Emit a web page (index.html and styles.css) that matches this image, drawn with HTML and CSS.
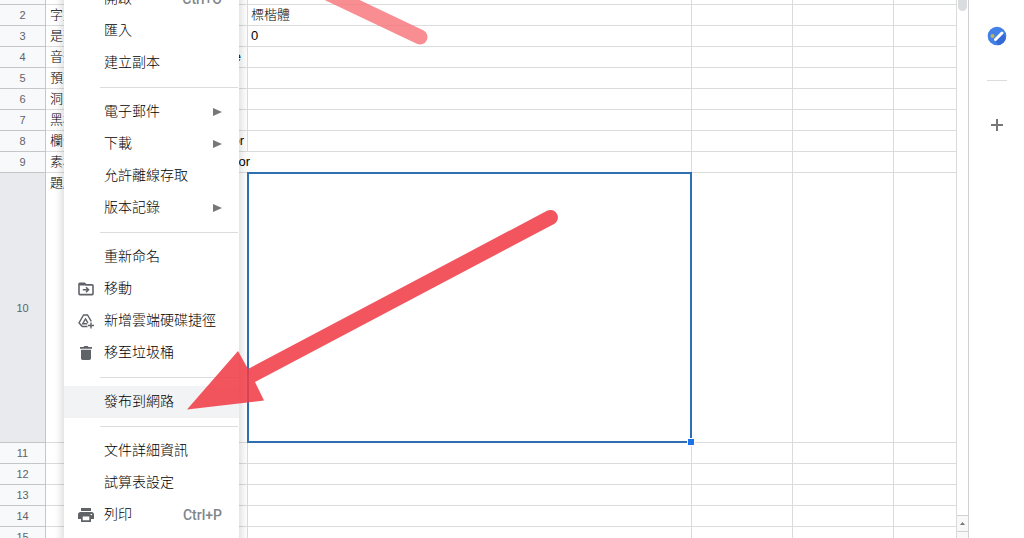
FILE: index.html
```html
<!DOCTYPE html>
<html lang="zh-Hant">
  <head>
    <meta charset="UTF-8" />
    <meta name="viewport" content="width=device-width, initial-scale=1.0" />
    <title>試算表</title>
    <link rel="stylesheet" href="styles.css">
  </head>
  <body>
    <div class="app">
      <!-- Spreadsheet -->
      <main class="sheet">
        <table class="grid">
          <colgroup>
            <col class="col-head" />
            <col class="col-a" />
            <col class="col-b" />
            <col class="col-c" />
            <col class="col-c" />
            <col />
          </colgroup>
          <tbody>
            <tr><th></th><td></td><td></td><td></td><td></td><td></td></tr>
            <tr><th scope="row">2</th><td>字型</td><td>標楷體</td><td></td><td></td><td></td></tr>
            <tr><th scope="row">3</th><td>是否</td><td>0</td><td></td><td></td><td></td></tr>
            <tr><th scope="row">4</th><td><div class="pair pair-short"><span>音效</span><span>e</span></div></td><td></td><td></td><td></td><td></td></tr>
            <tr><th scope="row">5</th><td>預設</td><td></td><td></td><td></td><td></td></tr>
            <tr><th scope="row">6</th><td>洞</td><td></td><td></td><td></td><td></td></tr>
            <tr><th scope="row">7</th><td>黑板</td><td></td><td></td><td></td><td></td></tr>
            <tr><th scope="row">8</th><td><div class="pair"><span>欄位</span><span>or</span></div></td><td></td><td></td><td></td><td></td></tr>
            <tr><th scope="row">9</th><td class="spill"><div class="pair pair-long"><span>素材</span><span>or</span></div></td><td></td><td></td><td></td><td></td></tr>
            <tr class="tall"><th scope="row">10</th><td>題庫</td><td class="selected"><span class="handle"></span></td><td></td><td></td><td></td></tr>
            <tr><th scope="row">11</th><td></td><td></td><td></td><td></td><td></td></tr>
            <tr><th scope="row">12</th><td></td><td></td><td></td><td></td><td></td></tr>
            <tr><th scope="row">13</th><td></td><td></td><td></td><td></td><td></td></tr>
            <tr><th scope="row">14</th><td></td><td></td><td></td><td></td><td></td></tr>
            <tr><th scope="row">15</th><td></td><td></td><td></td><td></td><td></td></tr>
          </tbody>
        </table>
      </main>

      <!-- Scrollbar -->
      <div class="scrollbar">
        <div class="thumb"></div>
        <div class="scroll-buttons">
          <button class="scroll-btn" aria-label="向上捲動">
            <svg width="5" height="3" viewBox="0 0 5 3"><path d="M0 3 2.500 0 5 3z" fill="#777" /></svg>
          </button>
          <button class="scroll-btn" aria-label="向下捲動"></button>
        </div>
      </div>

      <!-- Side panel -->
      <aside class="side">
        <button class="side-btn" aria-label="Tasks">
          <svg width="20" height="20" viewBox="0 0 20 20">
            <circle cx="10" cy="10" r="9.300" fill="#4380e8" />
            <path d="M8 14.500 16 7l2.800 5A9.300 9.300 0 0 1 11 19.200z" fill="#3569d6" />
            <circle cx="5.500" cy="10" r="2" fill="#c5b35a" />
            <path d="M8.500 13.500 15 7" stroke="#fff" stroke-width="3" stroke-linecap="round" />
          </svg>
        </button>
        <hr class="side-line" />
        <button class="side-btn" aria-label="取得外掛程式">
          <svg width="12" height="12" viewBox="0 0 12 12"><path d="M6 0v12M0 6h12" stroke="#777" stroke-width="2" /></svg>
        </button>
      </aside>
    </div>

    <!-- File menu -->
    <nav class="menu">
      <button class="item"><span class="icon"></span><span class="label">開啟</span><span class="key">Ctrl+O</span></button>
      <button class="item"><span class="icon"></span><span class="label">匯入</span></button>
      <button class="item"><span class="icon"></span><span class="label">建立副本</span></button>
      <hr />
      <button class="item"><span class="icon"></span><span class="label">電子郵件</span><span class="more"></span></button>
      <button class="item"><span class="icon"></span><span class="label">下載</span><span class="more"></span></button>
      <button class="item"><span class="icon"></span><span class="label">允許離線存取</span></button>
      <button class="item"><span class="icon"></span><span class="label">版本記錄</span><span class="more"></span></button>
      <hr />
      <button class="item"><span class="icon"></span><span class="label">重新命名</span></button>
      <button class="item">
        <span class="icon">
          <svg width="16" height="14" viewBox="0 0 16 14" fill="none" stroke="#5f6368">
            <path d="M1 2.200v9.600c0 .5.300.8.800.8h12.400c.5 0 .8-.3.800-.8V3.700c0-.5-.3-.8-.8-.8H8L6.500 1.400H1.800c-.5 0-.8.300-.8.800z" stroke-width="1.600" />
            <path d="M1.500 2h5l1 1h-6z" fill="#5f6368" />
            <path d="M4.800 7.800h5.400M8 5.300l2.500 2.500L8 10.300" stroke-width="1.600" />
          </svg>
        </span>
        <span class="label">移動</span>
      </button>
      <button class="item">
        <span class="icon">
          <svg width="16" height="16" viewBox="0 0 16 16" fill="none" stroke="#5f6368" stroke-width="1.400">
            <path d="M9.500 13.500H4.200L1 9.800 5.600 2h3.900l3.800 6.300" />
            <path d="M9.300 10.700H4.700L7.500 5.800l2.400 4.100" />
            <path d="M13 9.500v6M10 12.500h6" />
          </svg>
        </span>
        <span class="label">新增雲端硬碟捷徑</span>
      </button>
      <button class="item">
        <span class="icon">
          <svg width="12" height="14" viewBox="0 0 12 14" fill="#5f6368">
            <path d="M0 1h3.500l.8-1h3.400l.8 1H12v1.800H0zM1 3.800h10V12.300c0 1-.7 1.700-1.700 1.700H2.700C1.700 14 1 13.300 1 12.300z" />
          </svg>
        </span>
        <span class="label">移至垃圾桶</span>
      </button>
      <hr />
      <button class="item active"><span class="icon"></span><span class="label">發布到網路</span></button>
      <hr />
      <button class="item"><span class="icon"></span><span class="label">文件詳細資訊</span></button>
      <button class="item"><span class="icon"></span><span class="label">試算表設定</span></button>
      <button class="item">
        <span class="icon">
          <svg width="16" height="14" viewBox="0 0 16 14">
            <path d="M3 0h10v3H3zM2.500 4h11C15 4 16 5 16 6.500V11h-3v3H3v-3H0V6.500C0 5 1 4 2.500 4zM4.700 8.500v3.800h6.600V8.500z" fill="#5f6368" fill-rule="evenodd" />
            <circle cx="13.300" cy="6.500" r=".8" fill="#fff" />
          </svg>
        </span>
        <span class="label">列印</span><span class="key">Ctrl+P</span>
      </button>
    </nav>

    <!-- Red pointers -->
    <svg class="pointers" width="600" height="420" viewBox="0 0 600 420">
      <path d="M300-20 420 37" stroke="#f6747a" stroke-opacity=".82" stroke-width="15" stroke-linecap="round" />
      <path d="M187 409.500 238 351l10 18L547.500 210.500a7.500 7.500 0 0 1 7 13.200L255 382l9 18.500z" fill="#f03c46" fill-opacity=".87" />
    </svg>
  </body>
</html>
```

FILE: styles.css
```css
body {
  margin: 0;
  height: 100vh;
  position: relative;
  overflow: hidden;
  background: #fff;
  color: #000;
  font-family: "Liberation Sans", "Noto Sans CJK TC", sans-serif;
  font-size: 13px;
}

button {
  border: none;
  padding: 0;
  background: none;
  font-family: inherit;
  cursor: pointer;
}

svg {
  display: block;
}

.app {
  display: flex;
  height: 100%;
}

/* Grid */
.sheet {
  flex: 1;
  min-width: 0;
  overflow: hidden;
}

.grid {
  width: 100%;
  margin-top: -16px; /* scrolled a little */
  table-layout: fixed;
  border-collapse: separate;
  border-spacing: 0;
}

.col-head {
  width: 46px;
}

.col-a {
  width: 202px;
}

.col-b {
  width: 444px;
}

.col-c {
  width: 101px;
}

.grid tr {
  height: 21px;
}

.grid tr.tall {
  height: 270px;
}

.grid th,
.grid td {
  box-sizing: border-box;
  padding: 0 3px;
  border-right: 1px solid #dadcdc;
  border-bottom: 1px solid #dadcdc;
  line-height: 20px;
  white-space: nowrap;
}

.grid th {
  padding: 0;
  background: #f8f9fb;
  border-color: #c4c7c8;
  color: #5f6368;
  font-size: 11px;
  font-weight: normal;
  text-align: center;
}

.grid td {
  font-weight: 300;
  text-align: left;
  vertical-align: top;
}

.grid td:nth-child(2) {
  padding-left: 4px;
}

.grid .tall th {
  background: #e8eaed;
}

.grid .spill {
  border-right-color: transparent;
}

.pair {
  display: flex;
  justify-content: space-between;
}

.pair-short {
  margin-right: 3px;
}

.pair-long {
  margin-right: -6px;
}

.selected {
  position: relative;
}

.selected::after {
  content: "";
  position: absolute;
  inset: -1px;
  border: 2px solid #2f6eb0;
}

.handle {
  position: absolute;
  right: -4px;
  bottom: -4px;
  z-index: 1;
  width: 6px;
  height: 6px;
  border: 1px solid #fff;
  background: #1a73e8;
}

/* Scrollbar */
.scrollbar {
  display: flex;
  flex-direction: column;
  justify-content: space-between;
  width: 11px;
  border-right: 1px solid #d0d2d4;
}

.thumb {
  height: 11px;
  margin: 0 1px;
  border-radius: 0 0 5px 5px;
  background: #dadce0;
}

.scroll-buttons {
  height: 23px;
  overflow: hidden;
}

.scroll-btn {
  display: flex;
  align-items: center;
  justify-content: center;
  box-sizing: border-box;
  width: 100%;
  height: 16px;
  border-top: 1px solid #d0d2d4;
  background: #f8f8f8;
}

/* Side panel */
.side {
  display: flex;
  flex-direction: column;
  align-items: center;
  width: 55px;
  padding-top: 16px;
  box-sizing: border-box;
}

.side-btn {
  display: flex;
  align-items: center;
  justify-content: center;
  width: 40px;
  height: 40px;
}

.side-line {
  width: 20px;
  margin: 24px 0;
  border: none;
  border-top: 1px solid #dadce0;
}

/* Menu */
.menu {
  position: absolute;
  top: -17px;
  left: 64px;
  width: 175px;
  padding-bottom: 12px;
  background: #fff;
  box-shadow: 0 2px 8px 2px rgba(60, 64, 67, 0.2);
}

.menu hr {
  margin: 8px 1px 8px 36px;
  border: none;
  border-top: 1px solid #dadce0;
}

.item {
  display: flex;
  align-items: center;
  box-sizing: border-box;
  width: 100%;
  height: 32px;
  padding: 0 17px 0 12px;
  color: #000;
  font-size: 14px;
  font-weight: 300;
  line-height: 20px;
  text-align: left;
}

.active {
  background: #f1f3f4;
}

.icon {
  display: flex;
  justify-content: center;
  width: 20px;
  margin-right: 8px;
}

.label {
  flex: 1;
  padding-bottom: 2px;
  white-space: nowrap;
}

.key {
  color: #80868b;
  font-family: Roboto, sans-serif;
  font-weight: 500;
}

.more {
  border: 4px solid transparent;
  border-left: 9px solid #777;
  border-right: none;
}

.pointers {
  position: absolute;
  top: 0;
  left: 0;
  pointer-events: none;
}
```
